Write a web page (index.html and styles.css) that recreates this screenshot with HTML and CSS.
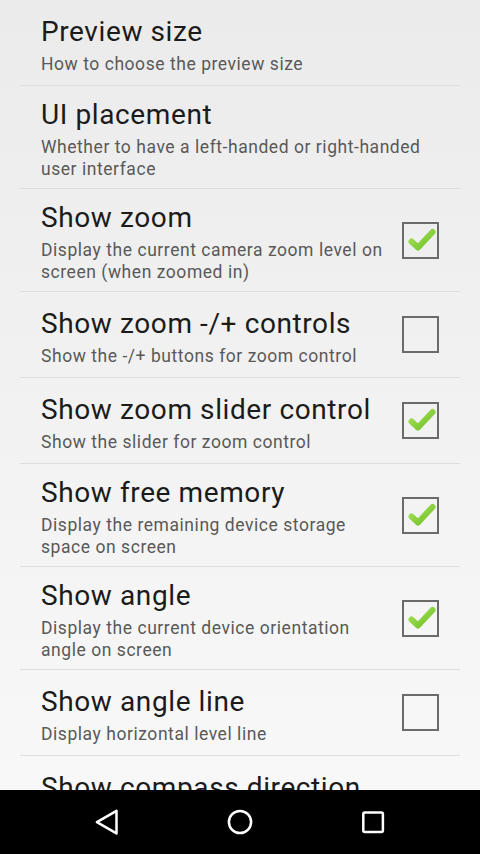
FILE: index.html
```html
<!DOCTYPE html>
<html lang="en">
<head>
    <meta charset="UTF-8">
    <meta name="viewport" content="width=device-width, initial-scale=1.0">
    <title>Settings</title>
    <link rel="stylesheet" href="styles.css">
</head>
<body>
    <div class="screen">
        <div class="prefs">
            <ul class="pref-list">
                <li class="pref">
                    <div class="pref-text">
                        <div class="pref-title">Preview size</div>
                        <div class="pref-summary">How to choose the preview size</div>
                    </div>
                </li>
                <li class="pref">
                    <div class="pref-text">
                        <div class="pref-title">UI placement</div>
                        <div class="pref-summary">Whether to have a left-handed or right-handed user interface</div>
                    </div>
                </li>
                <li class="pref">
                    <div class="pref-text">
                        <div class="pref-title">Show zoom</div>
                        <div class="pref-summary">Display the current camera zoom level on screen (when zoomed in)</div>
                    </div>
                    <span class="checkbox checked"><svg viewBox="0 0 37 37"><use href="#tick"/></svg></span>
                </li>
                <li class="pref">
                    <div class="pref-text">
                        <div class="pref-title">Show zoom -/+ controls</div>
                        <div class="pref-summary">Show the -/+ buttons for zoom control</div>
                    </div>
                    <span class="checkbox"></span>
                </li>
                <li class="pref">
                    <div class="pref-text">
                        <div class="pref-title">Show zoom slider control</div>
                        <div class="pref-summary">Show the slider for zoom control</div>
                    </div>
                    <span class="checkbox checked"><svg viewBox="0 0 37 37"><use href="#tick"/></svg></span>
                </li>
                <li class="pref">
                    <div class="pref-text">
                        <div class="pref-title">Show free memory</div>
                        <div class="pref-summary">Display the remaining device storage space on screen</div>
                    </div>
                    <span class="checkbox checked"><svg viewBox="0 0 37 37"><use href="#tick"/></svg></span>
                </li>
                <li class="pref">
                    <div class="pref-text">
                        <div class="pref-title">Show angle</div>
                        <div class="pref-summary">Display the current device orientation angle on screen</div>
                    </div>
                    <span class="checkbox checked"><svg viewBox="0 0 37 37"><use href="#tick"/></svg></span>
                </li>
                <li class="pref">
                    <div class="pref-text">
                        <div class="pref-title">Show angle line</div>
                        <div class="pref-summary">Display horizontal level line</div>
                    </div>
                    <span class="checkbox"></span>
                </li>
                <li class="pref">
                    <div class="pref-text">
                        <div class="pref-title">Show compass direction</div>
                        <div class="pref-summary">Display the compass direction</div>
                    </div>
                </li>
            </ul>
        </div>

        <!-- Navigation bar -->
        <div class="navbar">
            <svg class="nav-icon" viewBox="0 0 30 30"><path d="M4.9 15.2 L24.5 3.9 V26.4 Z" fill="none" stroke="#fff" stroke-width="2.5" stroke-linejoin="round"/></svg>
            <svg class="nav-icon" viewBox="0 0 30 30"><circle cx="15" cy="15" r="11.1" fill="none" stroke="#fff" stroke-width="2.5"/></svg>
            <svg class="nav-icon" viewBox="0 0 30 30"><rect x="5.3" y="5.5" width="19.6" height="19.6" rx="1.5" fill="none" stroke="#fff" stroke-width="2.5"/></svg>
        </div>
    </div>

    <svg class="defs" width="0" height="0">
        <defs>
            <linearGradient id="tick-grad" x1="0" y1="0" x2="1" y2="1">
                <stop offset="0" stop-color="#a6e25a"/>
                <stop offset="1" stop-color="#6fc027"/>
            </linearGradient>
            <symbol id="tick" viewBox="0 0 37 37">
                <path d="M9.5 19.5 L16 25.5 L30.5 10" fill="none" stroke="url(#tick-grad)" stroke-width="6" stroke-linecap="round" stroke-linejoin="round"/>
            </symbol>
        </defs>
    </svg>
</body>
</html>
```

FILE: styles.css
```css
body {
    margin: 0;
    font-family: Roboto, "Noto Sans", sans-serif;
    background: #000;
}
.screen {
    width: 480px;
    height: 854px;
    display: flex;
    flex-direction: column;
}
.prefs {
    flex: 1;
    overflow: hidden;
    background: linear-gradient(#ebebeb, #f8f8f8);
}
.pref-list {
    list-style: none;
    margin: 0 20px;
    padding: 0;
}
.pref {
    display: flex;
    align-items: center;
    gap: 14px;
    box-sizing: border-box;
    min-height: 86px;
    padding: 12px 21px 8px 21px;
    border-bottom: 1px solid #dedede;
}
.pref-text {
    flex: 1;
}
.pref-title {
    font-size: 28px;
    line-height: 34px;
    letter-spacing: 0.6px;
    color: #1b1b1b;
    margin-bottom: 4px;
}
.pref-summary {
    font-size: 17.5px;
    line-height: 22px;
    letter-spacing: 0.55px;
    color: #595959;
}
.checkbox {
    flex: none;
    width: 37px;
    height: 37px;
    box-sizing: border-box;
    border: 2px solid #6b6b6b;
    position: relative;
    margin-top: -4px;
}
.checkbox svg {
    position: absolute;
    left: -2px;
    top: -2px;
    width: 37px;
    height: 37px;
}
.navbar {
    flex: none;
    height: 64px;
    background: #000;
    display: flex;
    align-items: center;
    justify-content: center;
    gap: 103px;
}
.nav-icon {
    width: 30px;
    height: 30px;
}
.defs {
    position: absolute;
}
```
